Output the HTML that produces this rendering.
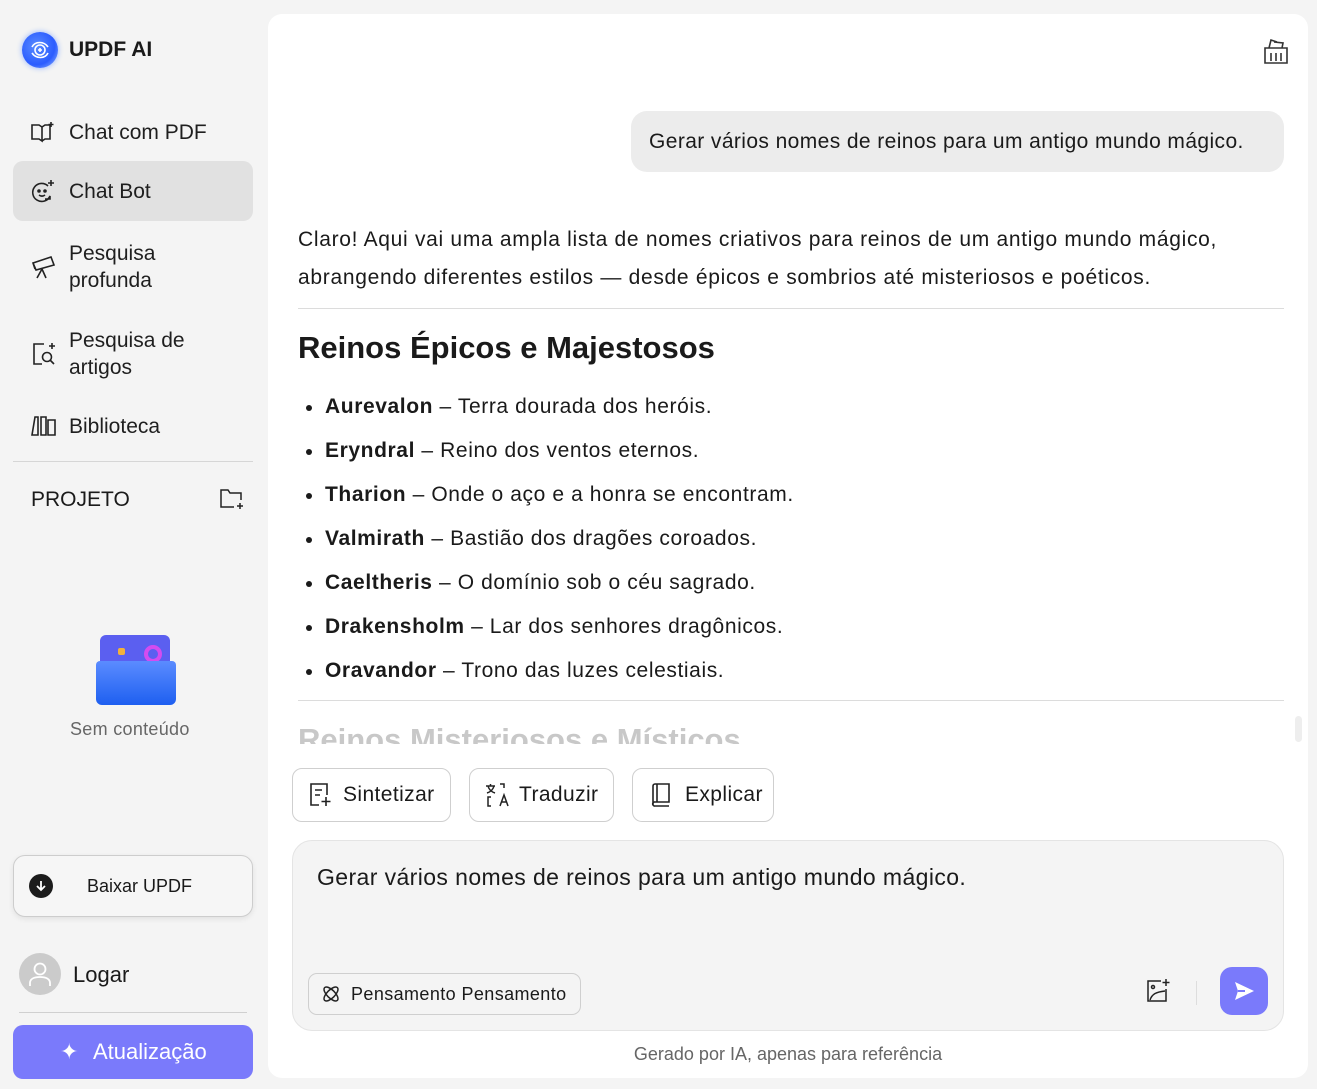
<!DOCTYPE html>
<html><head><meta charset="utf-8"><style>
*{box-sizing:border-box;margin:0;padding:0}
body{width:1317px;height:1089px;background:#f4f4f4;font-family:"Liberation Sans",sans-serif;color:#1a1a1a;position:relative;overflow:hidden}
.abs{position:absolute}
.nav{position:absolute;left:13px;width:240px;display:flex;align-items:center;font-size:21px;color:#1f1f1f}
.nav svg{position:absolute;left:17px}
.nav span{position:absolute;left:56px;line-height:27px}
.card{position:absolute;left:268px;top:14px;width:1040px;height:1064px;background:#fff;border-radius:14px;letter-spacing:0.4px}
.btn{position:absolute;top:754px;height:54px;border:1px solid #cfcfcf;border-radius:10px;background:#fff;font-size:21px;display:flex;align-items:center}
li{list-style:none;position:relative;padding-left:27px;height:44px;font-size:21px;line-height:24px}
li:before{content:"";position:absolute;left:8px;top:10px;width:6px;height:6px;border-radius:3px;background:#1a1a1a}
</style></head><body>
<div class="abs" style="left:22px;top:32px;width:36px;height:36px;border-radius:50%;background:radial-gradient(circle at 40% 40%,#5a8cff,#2b5cff 60%,#9ec2ff);box-shadow:0 0 6px #8fb0ff"></div>
<svg class="abs" style="left:28px;top:38px" width="24" height="24" viewBox="0 0 24 24" fill="none" stroke="#fff" stroke-width="1.6"><circle cx="12" cy="12" r="5"/><path d="M4 9c3-6 12-6 16 0M20 15c-3 6-12 6-16 0"/><path d="M12 10v4M10 12h4"/></svg>
<div class="abs" style="left:69px;top:38px;font-size:21px;font-weight:bold">UPDF AI</div>

<div class="nav" style="top:112px;height:40px"><svg width="26" height="24" viewBox="0 0 26 24" fill="none" stroke="#222" stroke-width="1.6"><path d="M2 5h7l3 2v14l-3-2H2zM12 7l3-2h5v14h-5l-3 2"/><path d="M21 2v5M18.5 4.5h5"/></svg><span>Chat com PDF</span></div>
<div class="nav" style="top:161px;height:60px;background:#e1e1e1;border-radius:10px"><svg width="26" height="26" viewBox="0 0 26 26" fill="none" stroke="#222" stroke-width="1.6"><path d="M18 8a9 9 0 1 0 2 10v3h-5"/><circle cx="9" cy="13" r="1" fill="#222"/><circle cx="15" cy="13" r="1" fill="#222"/><path d="M9 17c2 1.5 4 1.5 6 0M21 2v6M18 5h6"/></svg><span>Chat Bot</span></div>
<div class="nav" style="top:239px;height:56px"><svg width="28" height="28" viewBox="0 0 28 28" fill="none" stroke="#222" stroke-width="1.6"><path d="M3 10l18-6 3 8-18 5zM12 16l-5 9M12 16l4 9M3 10l2 6"/></svg><span>Pesquisa<br>profunda</span></div>
<div class="nav" style="top:326px;height:56px"><svg width="28" height="28" viewBox="0 0 28 28" fill="none" stroke="#222" stroke-width="1.6"><path d="M14 4H4v20h8"/><circle cx="17" cy="17" r="4.5"/><path d="M20 20l4 4M22 3v6M19 6h6"/></svg><span>Pesquisa de<br>artigos</span></div>
<div class="nav" style="top:406px;height:40px"><svg width="28" height="24" viewBox="0 0 28 24" fill="none" stroke="#222" stroke-width="1.6"><path d="M2 21L5 3h3v18zM11 3h5v18h-5zM18 6h7v15h-7z"/></svg><span>Biblioteca</span></div>
<div class="abs" style="left:13px;top:461px;width:240px;height:1px;background:#d6d6d6"></div>
<div class="abs" style="left:31px;top:488px;font-size:21px">PROJETO</div>
<svg class="abs" style="left:219px;top:487px" width="26" height="24" viewBox="0 0 26 24" fill="none" stroke="#222" stroke-width="1.5"><path d="M15 20H2V3h7l2 3h11v7"/><path d="M21 16v6M18 19h6"/></svg>

<div class="abs" style="left:100px;top:635px;width:70px;height:30px;background:#5b5ff0;border-radius:6px 6px 0 0"></div>
<div class="abs" style="left:144px;top:645px;width:18px;height:18px;border:4px solid #d34cf0;border-radius:50%"></div>
<div class="abs" style="left:118px;top:648px;width:7px;height:7px;background:#f3b13a;border-radius:2px"></div>
<div class="abs" style="left:96px;top:661px;width:80px;height:44px;background:linear-gradient(#5b8cff,#1e5ff0);border-radius:4px 4px 6px 6px"></div>
<div class="abs" style="left:70px;top:719px;font-size:18px;color:#666;letter-spacing:0.3px">Sem conteúdo</div>

<div class="abs" style="left:13px;top:855px;width:240px;height:62px;border:1px solid #cdcdcd;border-radius:12px;background:#f6f6f6;box-shadow:0 2px 6px rgba(0,0,0,.08)"></div>
<div class="abs" style="left:29px;top:874px;width:24px;height:24px;border-radius:50%;background:#1c1c1c"></div>
<svg class="abs" style="left:29px;top:874px" width="24" height="24" viewBox="0 0 24 24" fill="none" stroke="#fff" stroke-width="1.8"><path d="M12 7v9M8 12l4 4 4-4"/></svg>
<div class="abs" style="left:87px;top:876px;font-size:18px">Baixar UPDF</div>

<div class="abs" style="left:19px;top:953px;width:42px;height:42px;border-radius:50%;background:#cbcbcb"></div>
<svg class="abs" style="left:19px;top:953px" width="42" height="42" viewBox="0 0 42 42" fill="none" stroke="#fff" stroke-width="1.8"><circle cx="21" cy="16" r="5.5"/><path d="M11 33v-3c0-4 4-6 10-6s10 2 10 6v3"/></svg>
<div class="abs" style="left:73px;top:962px;font-size:22px">Logar</div>
<div class="abs" style="left:19px;top:1012px;width:228px;height:1px;background:#d0d0d0"></div>
<div class="abs" style="left:13px;top:1025px;width:240px;height:54px;background:#7a7afb;border-radius:10px;color:#fff;font-size:22px"><span class="abs" style="left:47px;top:14px">✦</span><span class="abs" style="left:80px;top:14px">Atualização</span></div>

<div class="card">
<svg class="abs" style="left:994px;top:22px" width="28" height="30" viewBox="0 0 28 30" fill="none" stroke="#333" stroke-width="1.6"><path d="M3 12h22v15H3zM7 12l2-8 6 2M12 6l9 1-1 5M9 17v8M14 17v8M19 17v8"/></svg>
<div class="abs" style="left:363px;top:97px;width:653px;height:61px;background:#ececec;border-radius:16px;font-size:21px;line-height:61px;padding-left:18px">Gerar vários nomes de reinos para um antigo mundo mágico.</div>
<div class="abs" style="left:30px;top:207px;width:990px;font-size:21px;line-height:38px;letter-spacing:0.7px">Claro! Aqui vai uma ampla lista de nomes criativos para reinos de um antigo mundo mágico, abrangendo diferentes estilos — desde épicos e sombrios até misteriosos e poéticos.</div>
<div class="abs" style="left:30px;top:294px;width:986px;height:1px;background:#dcdcdc"></div>
<div class="abs" style="left:30px;top:316px;font-size:31px;font-weight:bold;letter-spacing:0">Reinos Épicos e Majestosos</div>
<ul class="abs" style="left:30px;top:381px;letter-spacing:0.6px">
<li><b>Aurevalon</b> – Terra dourada dos heróis.</li>
<li><b>Eryndral</b> – Reino dos ventos eternos.</li>
<li><b>Tharion</b> – Onde o aço e a honra se encontram.</li>
<li><b>Valmirath</b> – Bastião dos dragões coroados.</li>
<li><b>Caeltheris</b> – O domínio sob o céu sagrado.</li>
<li><b>Drakensholm</b> – Lar dos senhores dragônicos.</li>
<li><b>Oravandor</b> – Trono das luzes celestiais.</li>
</ul>
<div class="abs" style="left:30px;top:686px;width:986px;height:1px;background:#dcdcdc"></div>
<div class="abs" style="left:30px;top:708px;height:22px;overflow:hidden;font-size:31px;font-weight:bold;color:#c8c8c8;letter-spacing:0">Reinos Misteriosos e Místicos</div>
<div class="abs" style="left:1027px;top:702px;width:7px;height:26px;background:#eee;border-radius:4px"></div>

<div class="btn" style="left:24px;width:159px"><svg style="margin-left:14px" width="26" height="28" viewBox="0 0 26 28" fill="none" stroke="#222" stroke-width="1.6"><path d="M12 24H4V3h16v11M8 9h7M8 14h5"/><path d="M19 16v9M14.5 20.5h9"/></svg><span style="margin-left:10px">Sintetizar</span></div>
<div class="btn" style="left:201px;width:145px"><svg style="margin-left:13px" width="28" height="28" viewBox="0 0 28 28" fill="none" stroke="#222" stroke-width="1.5"><path d="M3 5h9M7.5 3v2M5 5c1 4 4 6 7 7M11 5c-1 4-4 6-7 7M17 3h4v4M8 16H5v9h3M17 25l4-11 4 11M18.5 21h5"/></svg><span style="margin-left:8px">Traduzir</span></div>
<div class="btn" style="left:364px;width:142px"><svg style="margin-left:16px" width="24" height="28" viewBox="0 0 24 28" fill="none" stroke="#222" stroke-width="1.6"><path d="M4 24V5a2 2 0 0 1 2-2h14v18H6a2 2 0 0 0-2 3 2 2 0 0 0 2 1h14M8 3v18"/></svg><span style="margin-left:12px">Explicar</span></div>

<div class="abs" style="left:24px;top:826px;width:992px;height:191px;background:#f4f4f4;border:1px solid #e4e4e4;border-radius:20px"></div>
<div class="abs" style="left:49px;top:850px;font-size:23px">Gerar vários nomes de reinos para um antigo mundo mágico.</div>
<div class="abs" style="left:40px;top:959px;width:273px;height:42px;border:1px solid #cfcfcf;border-radius:9px;font-size:18px;line-height:40px;padding-left:42px">Pensamento Pensamento</div>
<svg class="abs" style="left:52px;top:969px" width="22" height="22" viewBox="0 0 22 22" fill="none" stroke="#222" stroke-width="1.5"><ellipse cx="11" cy="11" rx="4" ry="9" transform="rotate(45 11 11)"/><ellipse cx="11" cy="11" rx="4" ry="9" transform="rotate(-45 11 11)"/></svg>
<svg class="abs" style="left:876px;top:963px" width="28" height="28" viewBox="0 0 28 28" fill="none" stroke="#222" stroke-width="1.5"><path d="M17 4H4v20h18V12"/><circle cx="9" cy="10" r="1.5"/><path d="M6 23c2-6 6-8 15-9M22 2v7M18.5 5.5h7"/></svg>
<div class="abs" style="left:928px;top:967px;width:1px;height:24px;background:#ddd"></div>
<div class="abs" style="left:952px;top:953px;width:48px;height:48px;background:#7a7afb;border-radius:12px"></div>
<svg class="abs" style="left:964px;top:965px" width="24" height="24" viewBox="0 0 24 24"><path d="M3 3l19 9-19 9 3-9z" fill="#fff"/><path d="M6 12h7" stroke="#7a7afb" stroke-width="2"/></svg>
<div class="abs" style="left:0;width:1040px;top:1030px;text-align:center;font-size:18px;color:#666;letter-spacing:0">Gerado por IA, apenas para referência</div>
</div>
</body></html>
